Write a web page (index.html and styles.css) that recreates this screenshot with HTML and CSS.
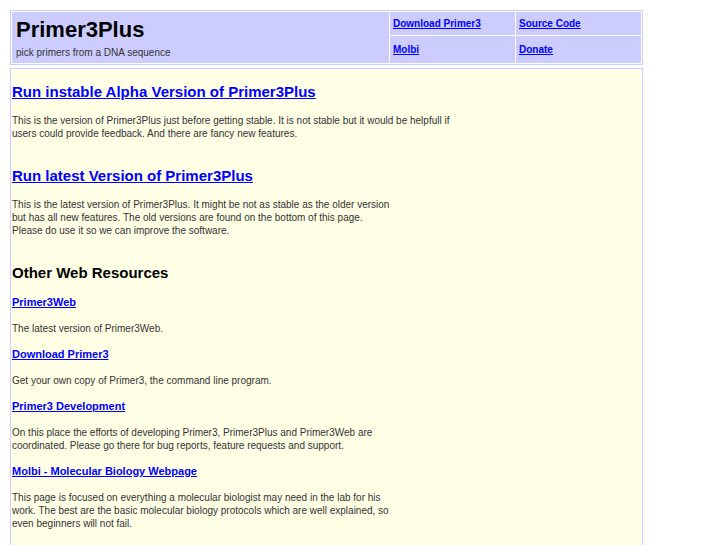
FILE: index.html
```html
<!DOCTYPE html>
<html>
<head>
<meta charset="utf-8">
<title>Primer3Plus</title>
<link rel="stylesheet" href="styles.css">
</head>
<body>
<div class="header">
  <div class="brand">
    <div class="title">Primer3Plus</div>
    <div class="tagline">pick primers from a DNA sequence</div>
  </div>
  <div class="navcell"><a href="#">Download Primer3</a></div>
  <div class="navcell"><a href="#">Source Code</a></div>
  <div class="navcell"><a href="#">Molbi</a></div>
  <div class="navcell"><a href="#">Donate</a></div>
</div>
<div class="content">
  <div class="inner">
    <h1 class="first"><a href="#">Run instable Alpha Version of Primer3Plus</a></h1>
    <p class="wide">This is the version of Primer3Plus just before getting stable. It is not stable but it would be helpfull if users could provide feedback. And there are fancy new features.</p>
    <h1><a href="#">Run latest Version of Primer3Plus</a></h1>
    <p>This is the latest version of Primer3Plus. It might be not as stable as the older version but has all new features. The old versions are found on the bottom of this page. Please do use it so we can improve the software.</p>
    <h2>Other Web Resources</h2>
    <h3><a href="#">Primer3Web</a></h3>
    <p>The latest version of Primer3Web.</p>
    <h3><a href="#">Download Primer3</a></h3>
    <p>Get your own copy of Primer3, the command line program.</p>
    <h3><a href="#">Primer3 Development</a></h3>
    <p>On this place the efforts of developing Primer3, Primer3Plus and Primer3Web are coordinated. Please go there for bug reports, feature requests and support.</p>
    <h3><a href="#">Molbi - Molecular Biology Webpage</a></h3>
    <p>This page is focused on everything a molecular biologist may need in the lab for his work. The best are the basic molecular biology protocols which are well explained, so even beginners will not fail.</p>
  </div>
</div>
</body>
</html>
```
FILE: styles.css
```css
html, body {
  margin: 0;
  padding: 0;
  background: #ffffff;
}
body {
  padding: 10px 0 0 10px;
  font-family: "Liberation Sans", Arial, sans-serif;
  color: #333333;
  font-size: 10px;
}
a {
  color: #0000ff;
}
.header {
  width: 629px;
  display: grid;
  grid-template-columns: 377px 125px 125px;
  grid-template-rows: 23px 27px;
  gap: 1px;
  padding: 1px;
  border: 1px solid #ccccff;
  background: #ffffff;
}
.brand {
  grid-row: 1 / span 2;
  background: #ccccff;
  padding: 6px 3px 0 4px;
}
.title {
  font-size: 22px;
  font-weight: bold;
  line-height: 24px;
  color: #000000;
}
.tagline {
  margin-top: 4px;
  font-size: 10px;
  line-height: 13px;
  color: #333333;
}
.navcell {
  background: #ccccff;
  display: flex;
  align-items: center;
  padding-left: 3px;
}
.navcell a {
  font-size: 10px;
  font-weight: bold;
  line-height: 13px;
}
.content {
  margin-top: 3px;
  width: 629px;
  padding: 1px;
  border: 1px solid #ccccff;
  background: #ffffff;
}
.inner {
  background: #ffffe6;
  border-top: 1px solid #ffffe6;
  padding-bottom: 60px;
}
h1 {
  font-size: 15px;
  line-height: 17px;
  font-weight: bold;
  margin: 27px 0 14px 0;
}
h1.first {
  margin-top: 12px;
}
h2 {
  font-size: 15px;
  line-height: 17px;
  font-weight: bold;
  color: #000000;
  margin: 27px 0 15px 0;
}
h3 {
  font-size: 11px;
  line-height: 13px;
  font-weight: bold;
  margin: 13px 0;
}
p {
  font-size: 10px;
  line-height: 13px;
  margin: 13px 0;
  max-width: 381px;
}
p.wide {
  max-width: 450px;
}
```
